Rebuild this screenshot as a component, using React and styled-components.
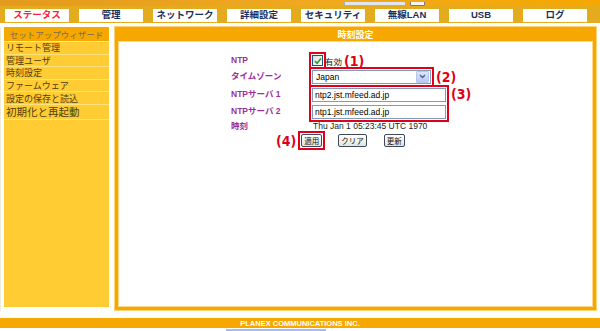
import styled, { createGlobalStyle } from "styled-components";

const GlobalStyle = createGlobalStyle`
  body {
    margin: 0;
    background: #ffffff;
    font-family: "Noto Sans CJK JP", "Liberation Sans", sans-serif;
  }
`;

const tabs = [
  { label: "ステータス", active: true },
  { label: "管理" },
  { label: "ネットワーク" },
  { label: "詳細設定" },
  { label: "セキュリティ" },
  { label: "無線LAN" },
  { label: "USB" },
  { label: "ログ" },
];

const menu = [
  "リモート管理",
  "管理ユーザ",
  "時刻設定",
  "ファームウェア",
  "設定の保存と読込",
  "初期化と再起動",
];

const App = () => {
  return (
    <Page>
      <GlobalStyle />
      <TopStrip>
        <TopSearch />
        <TopButton />
      </TopStrip>
      <TabBar>
        {tabs.map((t) => (
          <Tab key={t.label} $active={t.active}>
            {t.label}
          </Tab>
        ))}
      </TabBar>
      <Body>
        <Sidebar>
          <SideHeader>セットアップウィザード</SideHeader>
          {menu.map((m, i) => (
            <SideItem key={m} $big={i === menu.length - 1}>
              {m}
            </SideItem>
          ))}
        </Sidebar>
        <Main>
          <MainHeader>時刻設定</MainHeader>
          <MainInner>
            <Form>
              <Label>NTP</Label>
              <Field>
                <Mark>
                  <Check>
                    <svg width="8" height="8" viewBox="0 0 8 8">
                      <path d="M1 4 L3 6.2 L7 1.5" stroke="#21a121" strokeWidth="1.6" fill="none" />
                    </svg>
                  </Check>
                </Mark>
                <Small>有効</Small>
                <Note>(1)</Note>
              </Field>

              <Label>タイムゾーン</Label>
              <Field>
                <Mark>
                  <Select>
                    <span>Japan</span>
                    <Arrow>
                      <svg width="7" height="5" viewBox="0 0 7 5">
                        <path d="M1 1 L3.5 3.5 L6 1" stroke="#4d6185" strokeWidth="1.4" fill="none" />
                      </svg>
                    </Arrow>
                  </Select>
                </Mark>
                <Note>(2)</Note>
              </Field>

              <Label $tall>NTPサーバ 1</Label>
              <ServerField>
                <Mark>
                  <ServerStack>
                    <TextBox>ntp2.jst.mfeed.ad.jp</TextBox>
                    <TextBox>ntp1.jst.mfeed.ad.jp</TextBox>
                  </ServerStack>
                </Mark>
                <Note $top={2}>(3)</Note>
              </ServerField>
              <Label $tall>NTPサーバ 2</Label>

              <Label>時刻</Label>
              <Field>
                <TimeText>Thu Jan 1 05:23:45 UTC 1970</TimeText>
              </Field>
            </Form>
            <Buttons>
              <Note>(4)</Note>
              <Mark>
                <Button>適用</Button>
              </Mark>
              <Button $gap={13}>クリア</Button>
              <Button $gap={17}>更新</Button>
            </Buttons>
          </MainInner>
        </Main>
      </Body>
      <Footer>PLANEX COMMUNICATIONS INC.</Footer>
      <BlueStrip />
    </Page>
  );
};

export default App;

const Page = styled.div`
  width: 600px;
  height: 331px;
  overflow: hidden;
  display: flex;
  flex-direction: column;
`;

const TopStrip = styled.div`
  height: 6px;
  background: linear-gradient(90deg, #e49a1c, #f0a820 50%, #f6a800);
  display: flex;
  align-items: flex-end;
  padding-left: 344px;
  gap: 4px;
`;

const TopSearch = styled.div`
  width: 60px;
  height: 3px;
  background: #dfe6f3;
  border: 1px solid #9fb0cc;
  border-top: none;
`;

const TopButton = styled.div`
  width: 13px;
  height: 3px;
  background: #f4f4f4;
  border: 1px solid #777;
  border-top: none;
  border-radius: 0 0 2px 2px;
`;

const TabBar = styled.div`
  height: 17px;
  background: #e5ab1e;
  display: flex;
  align-items: center;
  gap: 10px;
  padding-left: 5px;
  box-sizing: border-box;
  padding-top: 1px;
`;

const Tab = styled.div`
  width: 64px;
  height: 13px;
  background: #ffffff;
  color: ${(p) => (p.$active ? "#ff1f3d" : "#1c2f5c")};
  font-size: 9.5px;
  font-weight: bold;
  display: flex;
  align-items: center;
  justify-content: center;
  line-height: 1;
  font-family: "Liberation Sans", "Noto Sans CJK JP", sans-serif;
`;

const Body = styled.div`
  margin-top: 4px;
  height: 284px;
  display: flex;
  gap: 6px;
  padding-left: 3px;
  border-left: 1px solid #f0ecd8;
`;

const Sidebar = styled.div`
  width: 105px;
  height: 280px;
  background: #ffcc33;
  display: flex;
  flex-direction: column;
`;

const SideHeader = styled.div`
  height: 14px;
  background: #f5a800;
  color: #7a6a50;
  font-size: 8.5px;
  display: flex;
  align-items: center;
  justify-content: center;
  border-bottom: 1px solid #ffe699;
`;

const SideItem = styled.div`
  height: ${(p) => (p.$big ? "14px" : "11.6px")};
  font-size: ${(p) => (p.$big ? "10.5px" : "9px")};
  color: #4f3c10;
  line-height: 1;
  display: flex;
  align-items: center;
  padding-left: 2px;
  border-bottom: 1px solid #ffe27a;
`;

const Main = styled.div`
  width: 481px;
  height: 283px;
  background: #f6a800;
  box-sizing: border-box;
  padding: 0 3px 3px 3px;
  display: flex;
  flex-direction: column;
  box-shadow: 0 0 0 1px #ffd27a;
`;

const MainHeader = styled.div`
  height: 14px;
  color: #ffffff;
  font-size: 9px;
  font-weight: bold;
  display: flex;
  align-items: center;
  justify-content: center;
`;

const MainInner = styled.div`
  flex: 1;
  background: #ffffff;
  border: 1px solid #ffd98a;
  padding: 11px 0 0 112px;
`;

const Form = styled.div`
  display: grid;
  grid-template-columns: 81px auto;
  grid-template-rows: 15px 17px 17px 17px 14px;
  align-items: center;
`;

const Label = styled.div`
  color: #9b2f9b;
  font-size: 8.5px;
  font-weight: bold;
  line-height: 1;
  font-family: "Liberation Sans", "Noto Sans CJK JP", sans-serif;
  padding-top: ${(p) => (p.$tall ? "2px" : "0")};
`;

const Field = styled.div`
  display: flex;
  align-items: center;
  margin-left: -3px;
`;

const ServerField = styled(Field)`
  grid-row: span 2;
  align-items: flex-start;
  align-self: stretch;
`;

const Mark = styled.div`
  display: inline-flex;
  border: 2px solid #e0001a;
  padding: 1px;
`;

const Check = styled.div`
  width: 9px;
  height: 9px;
  border: 1px solid #1c5180;
  background: linear-gradient(135deg, #dcdcd6, #ffffff);
  display: flex;
  align-items: center;
  justify-content: center;
`;

const Small = styled.span`
  font-size: 8.5px;
  color: #222;
  margin-left: -1px;
`;

const Note = styled.span`
  color: #e0001a;
  font-size: 14px;
  font-weight: bold;
  font-family: "DejaVu Sans Condensed", "Liberation Sans Narrow", sans-serif;
  margin-left: 2px;
  margin-top: ${(p) => (p.$top ? `${p.$top}px` : "0")};
  line-height: 1;
`;

const Select = styled.div`
  width: 114px;
  height: 12px;
  border: 1px solid #7f9db9;
  display: flex;
  align-items: center;
  justify-content: space-between;
  font-size: 8.5px;
  font-family: "Liberation Sans", sans-serif;
  padding-left: 3px;
  box-sizing: content-box;
`;

const Arrow = styled.div`
  width: 11px;
  height: 10px;
  margin-right: 1px;
  background: linear-gradient(#dce6fb, #b6c9f3);
  border: 1px solid #b8c8ea;
  border-radius: 1px;
  display: flex;
  align-items: center;
  justify-content: center;
`;

const ServerStack = styled.div`
  display: flex;
  flex-direction: column;
  gap: 3px;
`;

const TextBox = styled.div`
  width: 130px;
  height: 12px;
  border: 1px solid #7f9db9;
  font-size: 8.5px;
  font-family: "Liberation Sans", sans-serif;
  display: flex;
  align-items: center;
  padding-left: 2px;
`;

const TimeText = styled.span`
  font-size: 8.5px;
  font-family: "Liberation Sans", sans-serif;
  color: #222;
  margin-left: 4px;
`;

const Buttons = styled.div`
  display: flex;
  align-items: center;
  margin-left: 45px;
  margin-top: -2px;

  & > ${Note} {
    margin: 0 2px 0 0;
  }
`;

const Button = styled.button`
  height: 13px;
  padding: 0 2px;
  margin-left: ${(p) => (p.$gap ? `${p.$gap}px` : "0")};
  font-size: 7.5px;
  line-height: 1;
  font-family: "Noto Sans CJK JP", sans-serif;
  color: #111;
  background: linear-gradient(#ffffff, #e4e4dc);
  border: 1px solid #3c4a5c;
  border-radius: 2px;
  display: flex;
  align-items: center;
`;

const Footer = styled.div`
  margin-top: 7px;
  height: 10px;
  background: #f6a800;
  color: #ffffff;
  font-size: 7.5px;
  font-weight: bold;
  font-family: "Liberation Sans", sans-serif;
  display: flex;
  align-items: center;
  justify-content: center;
`;

const BlueStrip = styled.div`
  margin: 1px 0 0 226px;
  width: 100px;
  height: 2px;
  background: #a6bde8;
`;
